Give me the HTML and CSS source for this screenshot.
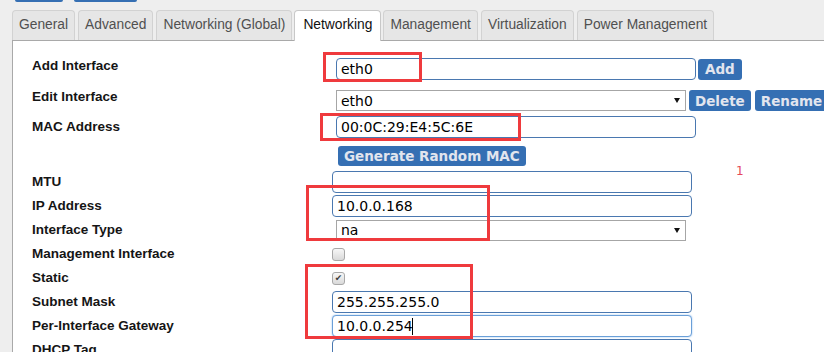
FILE: index.html
```html
<!DOCTYPE html>
<html lang="en">
<head>
    <meta charset="UTF-8">
    <meta name="viewport" content="width=device-width, initial-scale=1.0">
    <title>Networking</title>
    <link rel="stylesheet" href="styles.css">
</head>
<body>

<div class="page">
    <div class="topbar">
        <span class="top-btn top-btn-1"></span>
        <span class="top-btn top-btn-2"></span>
    </div>

    <ul class="tabs">
        <li class="tab">General</li>
        <li class="tab">Advanced</li>
        <li class="tab">Networking (Global)</li>
        <li class="tab active">Networking</li>
        <li class="tab">Management</li>
        <li class="tab">Virtualization</li>
        <li class="tab">Power Management</li>
    </ul>

    <div class="panel">
        <div class="row row-add">
            <label class="label" for="add">Add Interface</label>
            <div class="field">
                <input class="text indent" type="text" id="add" value="eth0">
                <button class="btn btn-add">Add</button>
            </div>
        </div>
        <div class="row row-edit">
            <label class="label" for="edit">Edit Interface</label>
            <div class="field">
                <span class="select indent">
                    <select id="edit"><option>eth0</option></select>
                </span>
                <button class="btn btn-delete">Delete</button>
                <button class="btn btn-rename">Rename</button>
            </div>
        </div>
        <div class="row row-mac">
            <label class="label" for="mac">MAC Address</label>
            <div class="field">
                <input class="text indent" type="text" id="mac" value="00:0C:29:E4:5C:6E">
            </div>
        </div>
        <div class="row row-gen">
            <span class="label"></span>
            <div class="field">
                <button class="btn btn-gen">Generate Random MAC</button>
            </div>
        </div>
        <div class="row row-std first">
            <label class="label" for="mtu">MTU</label>
            <div class="field"><input class="text" type="text" id="mtu" value=""></div>
        </div>
        <div class="row row-std">
            <label class="label" for="ip">IP Address</label>
            <div class="field"><input class="text" type="text" id="ip" value="10.0.0.168"></div>
        </div>
        <div class="row row-std">
            <label class="label" for="itype">Interface Type</label>
            <div class="field">
                <span class="select indent">
                    <select id="itype"><option>na</option></select>
                </span>
            </div>
        </div>
        <div class="row row-std">
            <label class="label" for="mgmt">Management Interface</label>
            <div class="field"><input class="check" type="checkbox" id="mgmt"></div>
        </div>
        <div class="row row-std">
            <label class="label" for="static">Static</label>
            <div class="field"><input class="check" type="checkbox" id="static" checked></div>
        </div>
        <div class="row row-std">
            <label class="label" for="mask">Subnet Mask</label>
            <div class="field"><input class="text" type="text" id="mask" value="255.255.255.0"></div>
        </div>
        <div class="row row-std">
            <label class="label" for="gw">Per-Interface Gateway</label>
            <div class="field">
                <span class="caret-wrap">
                    <input class="text focus" type="text" id="gw" value="10.0.0.254">
                    <span class="caret"></span>
                </span>
            </div>
        </div>
        <div class="row row-std">
            <label class="label" for="dhcp">DHCP Tag</label>
            <div class="field"><input class="text" type="text" id="dhcp" value=""></div>
        </div>
    </div>

    <!-- red annotation boxes drawn over the form -->
    <div class="marks">
        <div class="mark mark-add"></div>
        <div class="mark mark-mac"></div>
        <div class="mark mark-ip"></div>
        <div class="mark mark-static"></div>
        <span class="note">1</span>
    </div>
</div>

</body>
</html>
```

FILE: styles.css
```css
body {
    margin: 0;
    background: #eeeeee;
    font-family: "Liberation Sans", Arial, sans-serif;
    overflow: hidden;
}
.page {
    position: relative;
    width: 824px;
    height: 352px;
    overflow: hidden;
}

/* top buttons, only their bottom edge shows */
.topbar {
    display: flex;
    gap: 11px;
    height: 10px;
    padding-left: 15px;
}
.top-btn {
    height: 2px;
    background: #356fb3;
    border-radius: 0 0 3px 3px;
}
.top-btn-1 {
    width: 48px;
}
.top-btn-2 {
    width: 63px;
}

/* tabs */
.tabs {
    display: flex;
    gap: 3px;
    margin: 0 0 0 12px;
    padding: 0;
    list-style: none;
    position: relative;
    z-index: 1;
}
.tab {
    height: 29px;
    line-height: 28px;
    padding: 0 6px;
    background: #e6e6e6;
    border: 1px solid #d2d2d2;
    border-bottom: none;
    border-radius: 4px 4px 0 0;
    color: #505050;
    font-size: 13.8px;
    white-space: nowrap;
}
.tab.active {
    height: 30px;
    margin: 0 -1px -1px -1px;
    padding: 0 8px;
    background: #fff;
    border-color: #c8c8c8;
    color: #111;
}

/* panel */
.panel {
    margin-left: 12px;
    min-height: 400px;
    padding: 17px 0 0 19px;
    background: #fff;
    border-top: 1px solid #a9a9a9;
    border-left: 1px solid #a9a9a9;
}
.row {
    display: flex;
    align-items: center;
}
.label {
    flex: none;
    width: 300px;
    line-height: 16px;
    font-size: 13.5px;
    font-weight: bold;
    color: #151515;
}
.field {
    display: flex;
    align-items: center;
    white-space: nowrap;
}
.row-add {
    height: 22px;
}
.row-edit {
    height: 21px;
    margin-top: 10px;
}
.row-add .label,
.row-edit .label {
    padding-bottom: 7px;
}
.row-mac {
    height: 22px;
    margin-top: 5px;
}
.row-gen {
    height: 20px;
    margin-top: 8px;
}
.row-std {
    height: 24px;
}
.row-std.first {
    margin-top: 4px;
}

/* controls */
.text {
    box-sizing: border-box;
    width: 360px;
    height: 22px;
    margin: 0;
    padding: 0 4px;
    border: 1px solid #4a78b0;
    border-radius: 4px;
    font-family: "DejaVu Sans", Verdana, sans-serif;
    font-size: 14px;
    color: #000;
    background: #fff;
    outline: none;
}
.text.focus {
    border-color: #6a9fd8;
    box-shadow: 0 0 2px #8fbdf0;
}
.indent {
    margin-left: 4px;
}
.select {
    position: relative;
    display: inline-block;
}
.select select {
    appearance: none;
    box-sizing: border-box;
    width: 350px;
    height: 21px;
    margin: 0;
    padding: 0 4px;
    border: 1px solid #a6a6a6;
    border-radius: 0;
    background: #fff;
    font-family: "DejaVu Sans", Verdana, sans-serif;
    font-size: 14px;
    color: #000;
}
.select::after {
    content: "";
    position: absolute;
    right: 6px;
    top: 8px;
    border-left: 3px solid transparent;
    border-right: 3px solid transparent;
    border-top: 5px solid #111;
}
.btn {
    height: 21px;
    margin: 0;
    padding: 0 6px;
    border: none;
    border-radius: 3px;
    background: #356fb3;
    color: #e2e5ee;
    font-family: "DejaVu Sans", Verdana, sans-serif;
    font-size: 13.5px;
    font-weight: bold;
}
.btn-add {
    margin-left: 2px;
    padding: 0 7px;
}
.btn-delete {
    margin-left: 3px;
}
.btn-rename {
    margin-left: 4px;
}
.btn-gen {
    height: 20px;
    margin-left: 6px;
}
.check {
    appearance: none;
    box-sizing: border-box;
    display: inline-flex;
    align-items: center;
    justify-content: center;
    width: 13px;
    height: 13px;
    margin: 0;
    border: 1px solid #a8a8a8;
    border-radius: 3px;
    background: linear-gradient(#f7f7f7, #d9d9d9);
}
.check:checked::after {
    content: "\2714";
    font-family: "DejaVu Sans", sans-serif;
    font-size: 9px;
    line-height: 1;
    color: #3c3c3c;
}
.caret-wrap {
    position: relative;
    display: inline-block;
}
.caret {
    position: absolute;
    left: 80px;
    top: 3px;
    width: 1px;
    height: 17px;
    background: #000;
}

/* annotations */
.marks {
    position: absolute;
    top: 0;
    left: 0;
    width: 824px;
    height: 352px;
    pointer-events: none;
}
.mark {
    position: absolute;
    box-sizing: border-box;
    border: 3px solid #ef3a3d;
}
.mark-add {
    left: 323px;
    top: 52px;
    width: 99px;
    height: 30px;
}
.mark-mac {
    left: 320px;
    top: 113px;
    width: 201px;
    height: 28px;
}
.mark-ip {
    left: 306px;
    top: 185px;
    width: 184px;
    height: 56px;
}
.mark-static {
    left: 305px;
    top: 264px;
    width: 168px;
    height: 75px;
}
.note {
    position: absolute;
    left: 736px;
    top: 164px;
    color: #e5485a;
    font-family: "DejaVu Sans", sans-serif;
    font-size: 12px;
}
```
